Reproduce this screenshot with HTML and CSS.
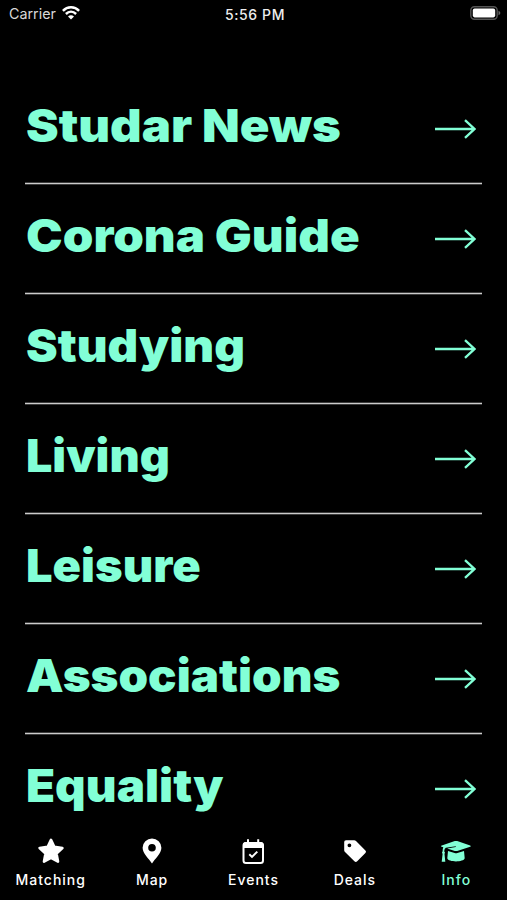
FILE: index.html
```html
<!DOCTYPE html>
<html lang="en">
<head>
<meta charset="utf-8">
<title>Studar Info</title>
<link rel="stylesheet" href="styles.css">
</head>
<body>
<svg width="0" height="0" class="defs"><symbol id="arrow" viewBox="0 0 42 20"><path d="M1 10H40.5M31 1.2L40.5 10L31 18.8" fill="none" stroke="currentColor" stroke-width="2.3"/></symbol></svg>
<header class="status">
  <div class="carrier"><span>Carrier</span>
    <svg width="18" height="14" viewBox="0 0 18 14"><g fill="none" stroke="#fff" stroke-width="2.5"><path d="M.9 4.8C5.4.2 12.6.2 17.1 4.8"/><path d="M3.9 8C6.9 5.1 11.1 5.1 14.1 8"/></g><path d="M9 13.5L6 10.5Q9 8.1 12 10.5Z" fill="#fff"/></svg>
  </div>
  <div class="time">5:56 PM</div>
  <svg class="battery" width="31" height="14" viewBox="0 0 31 14"><rect x=".8" y=".8" width="26.4" height="12.4" rx="3.6" fill="none" stroke="#555" stroke-width="1.4"/><rect x="2.8" y="2.6" width="22.4" height="8.8" rx="1.8" fill="#fff"/><path d="M28.5 4.7Q30.4 5.5 30.4 7T28.5 9.3Z" fill="#666"/></svg>
</header>
<main class="list">
  <a class="row"><span class="title news">Studar News</span><svg class="arrow"><use href="#arrow"/></svg></a>
  <a class="row"><span class="title corona">Corona Guide</span><svg class="arrow"><use href="#arrow"/></svg></a>
  <a class="row"><span class="title studying">Studying</span><svg class="arrow"><use href="#arrow"/></svg></a>
  <a class="row"><span class="title living">Living</span><svg class="arrow"><use href="#arrow"/></svg></a>
  <a class="row"><span class="title leisure">Leisure</span><svg class="arrow"><use href="#arrow"/></svg></a>
  <a class="row"><span class="title associations">Associations</span><svg class="arrow"><use href="#arrow"/></svg></a>
  <a class="row"><span class="title equality">Equality</span><svg class="arrow"><use href="#arrow"/></svg></a>
</main>
<nav class="tabs">
  <a class="tab"><svg width="32" height="28" viewBox="0 0 32 28"><path d="M16 2.9L19.3 9.9L27.4 11L21.5 16.6L23 24.6L16 20.9L9 24.6L10.5 16.6L4.6 11L12.7 9.9Z" fill="currentColor" stroke="currentColor" stroke-width="2.6" stroke-linejoin="round"/></svg><span>Matching</span></a>
  <a class="tab"><svg width="32" height="28" viewBox="0 0 32 28"><path fill-rule="evenodd" d="M16 26.5C13 22 6.6 16.3 6.6 10.8A9.4 9.2 0 0 1 25.4 10.8C25.4 16.3 19 22 16 26.5ZM16 6.9A3.8 3.8 0 1 0 16 14.5A3.8 3.8 0 1 0 16 6.9Z" fill="currentColor"/></svg><span>Map</span></a>
  <a class="tab"><svg width="32" height="28" viewBox="0 0 32 28"><g fill="none" stroke="currentColor" stroke-width="2"><rect x="6.5" y="6" width="19.5" height="20" rx="2.5"/><path d="M11 2.2V7M21.2 2.2V7M12.3 17.3L15 19.9L20.3 14.6"/></g><path d="M6 10.9V7.5Q6 5 9 5H23.5Q26.5 5 26.5 7.5V10.9Z" fill="currentColor"/></svg><span>Events</span></a>
  <a class="tab"><svg width="32" height="28" viewBox="0 0 32 28"><path fill-rule="evenodd" d="M7 3.2H15.2Q16.2 3.2 17 4L26.4 13.4Q27.7 14.8 26.4 16.1L18.2 24.3Q16.8 25.6 15.4 24.3L6 15Q5.2 14.2 5.2 13.2V5Q5.2 3.2 7 3.2ZM10.4 6.4A1.9 1.9 0 1 0 10.4 10.2A1.9 1.9 0 1 0 10.4 6.4Z" fill="currentColor"/></svg><span>Deals</span></a>
  <a class="tab active"><svg width="32" height="28" viewBox="0 -1 32 28"><path d="M1 8.2Q1 7.7 1.8 7.4L14.8 3.1Q16 2.7 17.2 3.1L30.2 7.4Q31.6 8 30.2 8.7L17.2 12.9Q16 13.3 14.8 12.9L7.2 10.5L15.8 9V8.2L5.8 9.7Q4.4 10.3 4.2 13.2Q5.6 14.4 4.5 15.9L5.3 23.8H1.7L2.6 15.9Q1.4 14.4 2.6 13.2Q2.6 10.7 3.3 9.2L1.7 8.8Q1 8.6 1 8.2Z" fill="currentColor"/><path d="M8 13L14.6 15.1Q16 15.5 17.4 15.1L24 13L24.7 20.3C23.7 24.5 8.3 24.5 7.3 20.3Z" fill="currentColor"/></svg><span>Info</span></a>
</nav>
</body>
</html>
```
FILE: styles.css
```css
* { box-sizing: border-box; }
body { margin: 0; width: 507px; height: 900px; overflow: hidden; background: #000; color: #fff; font-family: Inter, sans-serif; display: flex; flex-direction: column; }
.defs { position: absolute; }
.status { height: 28px; flex: none; display: grid; grid-template-columns: 1fr auto 1fr; align-items: center; padding: 0 6px 0 9px; font-size: 14.3px; }
.carrier { display: flex; align-items: center; gap: 6px; color: #d8d8d8; margin-top: -2px; }
.carrier svg { margin-top: -1px; }
.time { font-size: 14px; font-weight: 500; color: #eee; letter-spacing: .6px; }
.battery { justify-self: end; margin-top: -2px; }
.list { height: 796px; flex: none; padding: 46px 25px 0; }
.row { height: 110px; display: flex; align-items: center; justify-content: space-between; border-bottom: 1px solid #ccc; box-shadow: 0 1px #3c3c3c, inset 0 -1px #3c3c3c; color: #82ffd6; }
.title { line-height: 58px; margin: -5px 0 0 1px; font-size: 45px; font-weight: 900; white-space: nowrap; transform-origin: left; }
.news { transform: scaleX(1.09); }
.corona { transform: scaleX(1.091); }
.studying { transform: scaleX(1.057); }
.living { transform: scaleX(1.036); }
.leisure { transform: scaleX(1.045); }
.associations { transform: scaleX(1.054); }
.equality { transform: scaleX(1.056); }
.arrow { width: 42px; height: 20px; margin-right: 6px; flex: none; }
.row:last-child { border-color: transparent; box-shadow: none; }
.tabs { height: 76px; flex: none; display: grid; grid-template-columns: repeat(5, 1fr); }
.tab { display: flex; flex-direction: column; align-items: center; padding-top: 13px; font-size: 14px; font-weight: 500; letter-spacing: 1px; line-height: 20px; }
.tab span { margin-top: 5px; }
.active { color: #82ffd6; }
```
